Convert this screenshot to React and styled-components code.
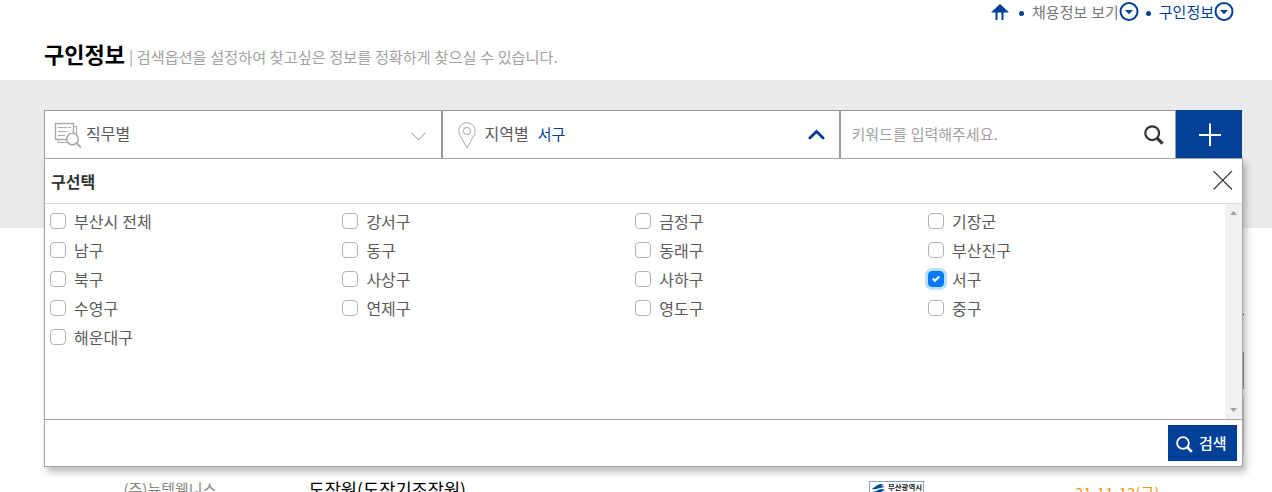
import styled, { createGlobalStyle } from "styled-components";

const GlobalStyle = createGlobalStyle`
    * {
        box-sizing: border-box;
    }

    body {
        margin: 0;
        background: #fff;
        color: #5a5a5a;
        font-family: "Noto Sans CJK KR", sans-serif;
        font-size: 16px;
        line-height: 24px;
        word-spacing: 0.6px;
    }

    svg {
        display: block;
        flex: none;
    }
`;

const Page = styled.div`
    height: 492px;
    overflow: hidden;
`;

const Header = styled.header`
    height: 80px;
    padding: 0 38px 0 44px;
`;

const Breadcrumb = styled.nav`
    height: 24px;
    display: flex;
    align-items: center;
    justify-content: flex-end;
    font-size: 15px;
    color: #777;
`;

const Crumb = styled.span`
    display: flex;
    align-items: center;
    color: ${(props) => (props.$active ? "#004097" : "#777")};
`;

const CrumbText = styled.span`
    padding-bottom: 1px;
`;

const Dot = styled.i`
    width: 5px;
    height: 5px;
    margin: 3px 8px 0 ${(props) => (props.$first ? "10px" : "7px")};
    border-radius: 50%;
    background: #004097;
`;

const TitleRow = styled.div`
    display: flex;
    align-items: baseline;
    height: 40px;
    padding-top: 13px;
`;

const Title = styled.h1`
    margin: 0;
    font-size: 22px;
    line-height: 32px;
    font-weight: 700;
    color: #000;
`;

const Subtitle = styled.p`
    margin: 0 0 0 4px;
    font-size: 15.2px;
    word-spacing: 0.25px;
    color: #a2a2a2;
    white-space: pre;
`;

const Band = styled.section`
    height: 148px;
    padding: 30px 30px 0 44px;
    background: #e9ebed;
`;

const Search = styled.div`
    position: relative;
    display: flex;
    width: 1198px;
    height: 48px;
`;

const Field = styled.div`
    display: flex;
    align-items: center;
    width: ${(props) => props.$width}px;
    border: 1px solid #999;
    border-bottom: 0;
    padding: ${(props) => props.$padding};
    background: #fff;
`;

const FieldLabel = styled.span`
    margin-left: ${(props) => props.$gap}px;
    padding-bottom: 3px;
`;

const Selected = styled.span`
    margin-left: 9px;
    padding-bottom: 2px;
    font-size: 15px;
    color: #004097;
`;

const Placeholder = styled.span`
    padding-bottom: 2px;
    font-size: 15px;
    color: #a2a2a2;
`;

const Spacer = styled.span`
    flex: 1;
`;

const PlusButton = styled.button`
    width: 66px;
    border: 0;
    padding: 2px 0 0 2px;
    display: flex;
    align-items: center;
    justify-content: center;
    background: #004097;
`;

const Panel = styled.div`
    position: absolute;
    top: 48px;
    left: 0;
    z-index: 2;
    width: 1199px;
    height: 309px;
    display: flex;
    flex-direction: column;
    border: 1px solid #a6a6a6;
    background: #fff;
    box-shadow: 3px 5px 7px rgba(0, 0, 0, 0.27);
`;

const PanelHead = styled.div`
    height: 45px;
    display: flex;
    align-items: center;
    justify-content: space-between;
    padding: 0 9px 1px 6px;
    border-bottom: 1px solid #ddd;
`;

const PanelTitle = styled.strong`
    font-weight: 700;
    color: #333;
`;

const PanelBody = styled.div`
    height: 215px;
    display: flex;
    justify-content: space-between;
`;

const Options = styled.div`
    width: 1175px;
    padding: 3px 0 0 5px;
    display: grid;
    grid-template-columns: 292.4px 292.8px 292.8px 292px;
    grid-auto-rows: 29px;
`;

const Option = styled.label`
    display: flex;
    align-items: center;
    gap: 8px;
    padding-bottom: 1px;
`;

const Checkbox = styled.span`
    width: 16px;
    height: 16px;
    display: flex;
    align-items: center;
    justify-content: center;
    border: 1px solid ${(props) => (props.$checked ? "#007bff" : "#adb5bd")};
    border-radius: 4px;
    background: ${(props) => (props.$checked ? "#007bff" : "#fff")};
    box-shadow: ${(props) => (props.$checked ? "0 0 0 3px #bfdeff" : "none")};
`;

const ScrollTrack = styled.div`
    width: 17px;
    display: flex;
    flex-direction: column;
    align-items: center;
    justify-content: space-between;
    padding: 7px 0 7px;
    background: #f1f1f1;
`;

const PanelFoot = styled.div`
    height: 47px;
    display: flex;
    align-items: center;
    justify-content: flex-end;
    padding-right: 5px;
    border-top: 1px solid #a6a6a6;
`;

const SearchButton = styled.button`
    width: 69px;
    height: 36px;
    border: 0;
    padding: 0 0 0 8px;
    display: flex;
    align-items: center;
    gap: 6px;
    background: #004097;
    color: #fff;
    font-family: inherit;
    font-size: 15px;
    font-weight: 500;

    svg {
        margin-top: 2px;
    }
`;

const ButtonText = styled.span`
    padding-bottom: 2px;
`;

const Results = styled.section`
    width: 1200px;
    margin-left: 44px;
`;

const Tools = styled.div`
    height: 249px;
    padding-top: 86px;
    display: flex;
    flex-direction: column;
    align-items: flex-end;
`;

const TabLine = styled.div`
    width: 60px;
    height: 1px;
    background: #004097;
`;

const ToolBox = styled.div`
    width: 100px;
    height: ${(props) => props.$height}px;
    margin-top: ${(props) => props.$top}px;
    border: 1px solid ${(props) => props.$color};
`;

const ResultRow = styled.div`
    height: 24px;
    display: grid;
    grid-template-columns: 264.5px 560.5px 206px 1fr;
    white-space: nowrap;
`;

const Company = styled.span`
    padding-left: 79.5px;
    font-size: 15px;
    color: #888;
`;

const JobTitle = styled.span`
    font-size: 17.6px;
    color: #000;
`;

const DueDate = styled.span`
    margin-top: 4px;
    font-size: 15px;
    color: #f7941d;
`;

const Badge = styled.span`
    width: 55px;
    height: 18px;
    margin-top: 4px;
    display: flex;
    gap: 2px;
    padding: 1px 1px 1px 2px;
    border: 1px solid #7f9fd0;
    font-size: 7.4px;
    line-height: 8px;
    font-weight: 700;
    color: #222;
`;

const districts = [
    "부산시 전체", "강서구", "금정구", "기장군",
    "남구", "동구", "동래구", "부산진구",
    "북구", "사상구", "사하구", "서구",
    "수영구", "연제구", "영도구", "중구",
    "해운대구",
];

function HomeIcon() {
    return (
        <svg width="18" height="16" viewBox="0 0 18 16">
            <path d="M9 0L18 8.5H0Z" fill="#004097" />
            <path d="M5.5 7V16M11.5 7V16" stroke="#004097" strokeWidth="2" />
        </svg>
    );
}

function CircleDown() {
    return (
        <svg width="20" height="20" viewBox="0 0 20 20">
            <circle cx="10" cy="9.5" r="8.5" fill="none" stroke="#004097" strokeWidth="2" />
            <path d="M6 8H14L10 12.3Z" fill="#004097" />
        </svg>
    );
}

function JobIcon() {
    return (
        <svg width="28" height="26" viewBox="0 0 28 26" fill="none" stroke="#aaa">
            <path d="M12 17.5H1.5V1.5H19.5V11" strokeWidth="1.4" />
            <path d="M4 5.5H13M14 5.5H17M4 9.5H13M4 13.5H11M14 9.5H15" />
            <path d="M4 17V20.5H13M22.5 4V12M20 4.5H22.5" />
            <circle cx="18.5" cy="17" r="5.8" strokeWidth="1.5" fill="#fff" />
            <path d="M22.5 21.2L27 25.5" strokeWidth="1.8" />
        </svg>
    );
}

function PinIcon() {
    return (
        <svg width="18" height="27" viewBox="0 0 18 27" fill="none" stroke="#aaa" style={{ marginTop: 2 }}>
            <path d="M9 26L1.6 12.5C-0.8 6.5 3 0.8 9 0.8S18.8 6.5 16.4 12.5Z" />
            <circle cx="9" cy="9" r="3.6" />
        </svg>
    );
}

function SearchIcon({ size, color, width }) {
    return (
        <svg width={size} height={size} viewBox="0 0 20 20" fill="none" stroke={color} strokeWidth={width}>
            <circle cx="8.2" cy="8.2" r="6.9" />
            <path d="M13 13L18.6 18.6" strokeWidth={width * 1.4} />
        </svg>
    );
}

export default function App() {
    return (
        <>
            <GlobalStyle />
            <Page>
                <Header>
                    <Breadcrumb>
                        <HomeIcon />
                        <Dot $first />
                        <Crumb>
                            <CrumbText>채용정보 보기</CrumbText>
                            <CircleDown />
                        </Crumb>
                        <Dot />
                        <Crumb $active>
                            <CrumbText>구인정보</CrumbText>
                            <CircleDown />
                        </Crumb>
                    </Breadcrumb>
                    <TitleRow>
                        <Title>구인정보</Title>
                        <Subtitle>| 검색옵션을 설정하여 찾고싶은 정보를 정확하게 찾으실 수 있습니다.</Subtitle>
                    </TitleRow>
                </Header>
                <Band>
                    <Search>
                        <Field $width={398} $padding="0 15px 0 9px">
                            <JobIcon />
                            <FieldLabel $gap={4}>직무별</FieldLabel>
                            <Spacer />
                            <svg width="15" height="9" viewBox="0 0 15 9" fill="none" stroke="#999" style={{ marginTop: 3 }}>
                                <path d="M0.5 0.5L7.5 8L14.5 0.5" />
                            </svg>
                        </Field>
                        <Field $width={398} $padding="0 14px 0 14.5px">
                            <PinIcon />
                            <FieldLabel $gap={9}>지역별</FieldLabel>
                            <Selected>서구</Selected>
                            <Spacer />
                            <svg width="17" height="11" viewBox="0 0 17 11" fill="none" stroke="#004097" strokeWidth="2.8" strokeLinecap="round">
                                <path d="M1.9 9L8.5 2.4L15.1 9" />
                            </svg>
                        </Field>
                        <Field $width={336} $padding="0 11px 0 10.5px">
                            <Placeholder>키워드를 입력해주세요.</Placeholder>
                            <Spacer />
                            <SearchIcon size={20} color="#333" width={2.2} />
                        </Field>
                        <PlusButton>
                            <svg width="22" height="24" viewBox="0 0 22 24" stroke="#fff" strokeWidth="2">
                                <path d="M11 0.5V23M0 12H22" />
                            </svg>
                        </PlusButton>
                        <Panel>
                            <PanelHead>
                                <PanelTitle>구선택</PanelTitle>
                                <svg width="20" height="20" viewBox="0 0 20 20" stroke="#333" strokeWidth="1.1">
                                    <path d="M0.5 0L19 18.5M19 0L0.5 18.5" />
                                </svg>
                            </PanelHead>
                            <PanelBody>
                                <Options>
                                    {districts.map((name) => (
                                        <Option key={name}>
                                            <Checkbox $checked={name === "서구"}>
                                                {name === "서구" && (
                                                    <svg width="8" height="8" viewBox="0 0 8 8" fill="#fff">
                                                        <path d="M6.564.75l-3.59 3.612-1.538-1.55L0 4.26l2.974 2.99L8 2.193z" />
                                                    </svg>
                                                )}
                                            </Checkbox>
                                            <span>{name}</span>
                                        </Option>
                                    ))}
                                </Options>
                                <ScrollTrack>
                                    <svg width="7" height="4" viewBox="0 0 7 4" fill="#a3a3a3">
                                        <path d="M3.5 0L7 4H0Z" />
                                    </svg>
                                    <svg width="7" height="4" viewBox="0 0 7 4" fill="#a3a3a3">
                                        <path d="M0 0H7L3.5 4Z" />
                                    </svg>
                                </ScrollTrack>
                            </PanelBody>
                            <PanelFoot>
                                <SearchButton>
                                    <SearchIcon size={17} color="#fff" width={2.2} />
                                    <ButtonText>검색</ButtonText>
                                </SearchButton>
                            </PanelFoot>
                        </Panel>
                    </Search>
                </Band>
                <Results>
                    <Tools>
                        <TabLine />
                        <ToolBox $height={37} $top={37} $color="#999" />
                        <ToolBox $height={58} $top={8} $color="#ced4da" />
                    </Tools>
                    <ResultRow>
                        <Company>(주)뉴텍웰니스</Company>
                        <JobTitle>도장원(도장기조장원)</JobTitle>
                        <Badge>
                            <svg width="14" height="14" viewBox="0 0 14 14" fill="#004a9f">
                                <path d="M1 5C4 4 5 1 9 1L12 2L9 3L13 4L8 5C6 5 4 7 0 6Z" />
                                <path d="M0 9C4 9 6 6 10 6L13 7L9 9L14 10H8C5 13 2 11 0 9Z" />
                            </svg>
                            부산광역시
                        </Badge>
                        <DueDate>21-11-12(금)</DueDate>
                    </ResultRow>
                </Results>
            </Page>
        </>
    );
}
